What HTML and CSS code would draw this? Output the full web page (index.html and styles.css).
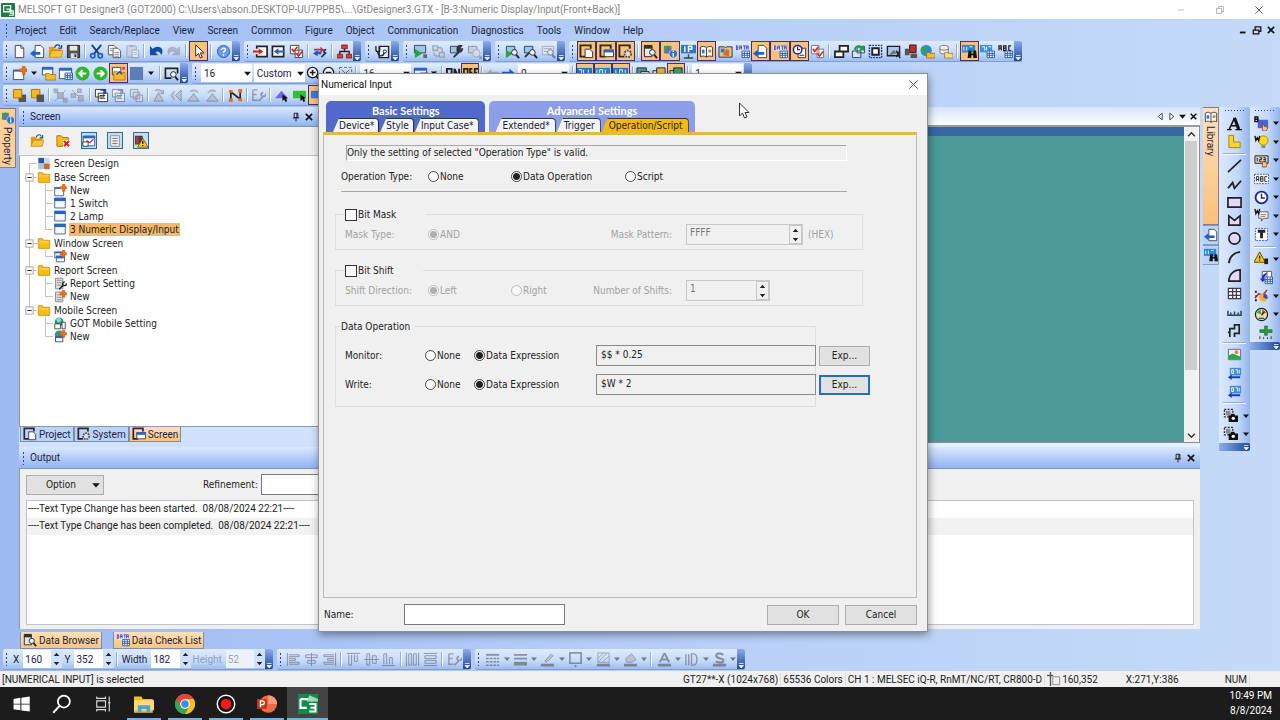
FILE: index.html
```
<!DOCTYPE html>
<html lang="en">
<head>
    <meta charset="UTF-8">
    <meta name="viewport" content="width=device-width, initial-scale=1.0">
    <title>MELSOFT GT Designer3</title>
    <link rel="stylesheet" href="styles.css">
</head>
<body>
    <div class="app">
        <!-- Title bar -->
        <header class="titlebar">
            <span class="icon" data-icon="gt"></span>
            <span class="titlebar-text">MELSOFT GT Designer3 (GOT2000) C:\Users\abson.DESKTOP-UU7PPB5\...\GtDesigner3.GTX - [B-3:Numeric Display/Input(Front+Back)]</span>
            <button class="caption" data-icon="min" aria-label="Minimize"></button>
            <button class="caption" data-icon="restore" aria-label="Restore"></button>
            <button class="caption" data-icon="close" aria-label="Close"></button>
        </header>

        <!-- Menu -->
        <nav class="menubar">
            <span class="grip"></span>
            <button>Project</button>
            <button>Edit</button>
            <button>Search/Replace</button>
            <button>View</button>
            <button>Screen</button>
            <button>Common</button>
            <button>Figure</button>
            <button>Object</button>
            <button>Communication</button>
            <button>Diagnostics</button>
            <button>Tools</button>
            <button>Window</button>
            <button>Help</button>
            <div class="mdi">
                <button class="mdi-button" data-icon="mdimin" aria-label="Minimize document"></button>
                <button class="mdi-button" data-icon="mdirestore" aria-label="Restore document"></button>
                <button class="mdi-button" data-icon="mdiclose" aria-label="Close document"></button>
            </div>
        </nav>

        <!-- Toolbars, filled in by app.js -->
        <div class="toolbars">
            <div class="toolbar-row">
                <div class="toolbar bar-standard" data-tools="new import open save | cut copy -paste | undo -redo | *select | help"></div>
                <div class="toolbar bar-edit" data-tools="screenin screenout check | swap | network"></div>
                <div class="toolbar bar-one" data-tools="stetho"></div>
                <div class="toolbar bar-comm" data-tools="run -cable tools -monitor"></div>
                <div class="toolbar bar-sim" data-tools="runfind toolfind -listfind"></div>
                <div class="toolbar bar-view" data-tools="*winpage *winblue *wingear | *dbfind *objinfo ip *book handbook data *pageleft *data *clockdoc checks | cascade swapwin frame cursorwin redwin globe database | *binocular gridtext abctable"></div>
            </div>
            <div class="toolbar-row">
                <div class="toolbar bar-screen" data-tools="newscreen v openscreen wingrid left right *openactive blue v | preview"></div>
                <div class="toolbar bar-display" data-tools="[16] [Custom] zoomin zoomout fit | [16] wingrid v | on *off | -arrowl arrowr [0] | *sys *label *ipn | layer layer2 *layer3 | [1]"></div>
            </div>
            <div class="toolbar-row">
                <div class="toolbar bar-arrange" data-tools="front back | -group -ungroup | stack -stack -stack2 | -rotate -flip -rotl -rotr | nodes | -wrench | tri rectpick *pick nodes"></div>
            </div>
        </div>

        <main class="workspace">
            <aside class="left-strip">
                <button class="side-tab"><span class="icon" data-icon="objinfo"></span>Property</button>
            </aside>

            <div class="center">
                <div class="panes">
                    <!-- Screen tree -->
                    <section class="screen-pane">
                        <div class="pane-header">
                            <span class="grip"></span>
                            <h2>Screen</h2>
                            <button class="pane-button" data-icon="pin" aria-label="Auto hide"></button>
                            <button class="pane-button" data-icon="mdiclose" aria-label="Close pane"></button>
                        </div>
                        <div class="tree-tools">
                            <button data-icon="open" aria-label="Open screen"></button>
                            <button data-icon="delete" aria-label="Delete screen"></button>
                            <button class="framed" data-icon="chartwin" aria-label="Screen property"></button>
                            <button class="framed" data-icon="list" aria-label="Detail"></button>
                            <button class="framed" data-icon="warnwin" aria-label="Check"></button>
                        </div>
                        <ul class="tree">
                            <li class="root first"><span class="icon" data-icon="design"></span>Screen Design</li>
                            <li class="root"><span class="icon expander" data-icon="minus"></span><span class="icon" data-icon="folder"></span>Base Screen</li>
                            <li class="leaf"><span class="icon" data-icon="newscreen"></span>New</li>
                            <li class="leaf"><span class="icon" data-icon="screen"></span>1 Switch</li>
                            <li class="leaf"><span class="icon" data-icon="screen"></span>2 Lamp</li>
                            <li class="leaf end"><span class="icon" data-icon="screen"></span><span class="selected">3 Numeric Display/Input</span></li>
                            <li class="root"><span class="icon expander" data-icon="minus"></span><span class="icon" data-icon="folder"></span>Window Screen</li>
                            <li class="leaf end"><span class="icon" data-icon="newwindow"></span>New</li>
                            <li class="root"><span class="icon expander" data-icon="minus"></span><span class="icon" data-icon="folder"></span>Report Screen</li>
                            <li class="leaf"><span class="icon" data-icon="report"></span>Report Setting</li>
                            <li class="leaf end"><span class="icon" data-icon="newreport"></span>New</li>
                            <li class="root last"><span class="icon expander" data-icon="minus"></span><span class="icon" data-icon="folder"></span>Mobile Screen</li>
                            <li class="leaf after"><span class="icon" data-icon="mobile"></span>GOT Mobile Setting</li>
                            <li class="leaf end after"><span class="icon" data-icon="newmobile"></span>New</li>
                        </ul>
                        <div class="pane-tabs">
                            <button><span class="icon" data-icon="winpage"></span>Project</button>
                            <button><span class="icon" data-icon="wingear"></span>System</button>
                            <button class="active"><span class="icon" data-icon="winblue"></span>Screen</button>
                        </div>
                    </section>

                    <!-- Document -->
                    <section class="document">
                        <div class="document-tabs">
                            <button data-icon="tabl" aria-label="Previous"></button>
                            <button data-icon="tabr" aria-label="Next"></button>
                            <button data-icon="down" aria-label="List"></button>
                            <button data-icon="mdiclose" aria-label="Close"></button>
                        </div>
                        <div class="canvas-frame">
                            <div class="canvas"></div>
                            <div class="scrollbar">
                                <button data-icon="up" aria-label="Scroll up"></button>
                                <div class="thumb"></div>
                                <button data-icon="chevron" aria-label="Scroll down"></button>
                            </div>
                        </div>
                    </section>
                </div>

                <!-- Output -->
                <section class="output">
                    <div class="pane-header">
                        <span class="grip"></span>
                        <h2>Output</h2>
                        <button class="pane-button" data-icon="pin" aria-label="Auto hide"></button>
                        <button class="pane-button" data-icon="mdiclose" aria-label="Close pane"></button>
                    </div>
                    <div class="output-body">
                        <div class="output-options">
                            <button class="option-button">Option<span class="icon" data-icon="down"></span></button>
                            <label for="refine">Refinement:</label>
                            <input id="refine" type="text">
                        </div>
                        <div class="log">
                            <div class="log-line">----Text Type Change has been started.&nbsp; 08/08/2024 22:21----</div>
                            <div class="log-line">----Text Type Change has been completed.&nbsp; 08/08/2024 22:21----</div>
                        </div>
                    </div>
                </section>
            </div>

            <aside class="right-strip">
                <button class="side-tab library"><span class="icon" data-icon="book"></span>Library</button>
                <button class="side-tab small" data-icon="pageleft" aria-label="Pages"></button>
                <button class="side-tab small" data-icon="binocular" aria-label="Search"></button>
            </aside>
            <div class="toolbar vertical bar-figure" data-tools="text logo | line polyline rect polygon circle arc sector table scale pipe | image dxf dxf | camera^ camera^"></div>
            <div class="toolbar vertical bar-object" data-tools="switch^ lamp^ numeric^ ascii^ clock^ comment^ textobj^ | alarm^ recipe graph^ meter^ slider"></div>
        </main>

        <div class="dock-tabs">
            <button><span class="icon" data-icon="dbfind"></span>Data Browser</button>
            <button><span class="icon" data-icon="data"></span>Data Check List</button>
        </div>

        <div class="toolbar-row bottom">
            <div class="toolbar bar-coords">
                <span class="grip"></span>
                <label for="px">X</label>
                <span class="spin"><input id="px" type="text" value="160"><span class="icon" data-icon="updown"></span></span>
                <label for="py">Y</label>
                <span class="spin"><input id="py" type="text" value="352"><span class="icon" data-icon="updown"></span></span>
                <span class="sep"></span>
                <label for="pw">Width</label>
                <span class="spin"><input id="pw" type="text" value="182"><span class="icon" data-icon="updown"></span></span>
                <label class="disabled" for="ph">Height</label>
                <span class="spin disabled"><input id="ph" type="text" value="52" disabled><span class="icon" data-icon="updown"></span></span>
                <span class="cap"></span>
            </div>
            <div class="toolbar bar-align" data-tools="-alignl -alignc -alignr | -alignt -alignm -alignb | -distx -disty | -wrench"></div>
            <div class="toolbar bar-style" data-tools="-dash^ -lines^ -pen^ -outline^ -hatch^ -bucket^ | -fonta^ -dee^ -ess^"></div>
        </div>

        <footer class="statusbar">
            <span class="status-message">[NUMERICAL INPUT] is selected</span>
            <span class="status-cell">GT27**-X (1024x768)</span>
            <span class="status-cell">65536 Colors</span>
            <span class="status-cell">CH 1 : MELSEC iQ-R, RnMT/NC/RT, CR800-D</span>
            <span class="status-cell status-pos"><span class="icon" data-icon="corner"></span>160,352</span>
            <span class="status-cell status-xy">X:271,Y:386</span>
            <span class="status-cell status-num">NUM</span>
        </footer>

        <nav class="taskbar">
            <button data-icon="start" aria-label="Start"></button>
            <button data-icon="search" aria-label="Search"></button>
            <button data-icon="taskview" aria-label="Task view"></button>
            <button class="running" data-icon="explorer" aria-label="File Explorer"></button>
            <button class="running" data-icon="chrome" aria-label="Chrome"></button>
            <button class="running" data-icon="record" aria-label="Recorder"></button>
            <button class="running" data-icon="powerpoint" aria-label="PowerPoint"></button>
            <button class="running current" data-icon="gttask" aria-label="GT Designer3"></button>
            <div class="clock"><span>10:49 PM</span><span>8/8/2024</span></div>
        </nav>
    </div>

    <!-- Numerical Input dialog -->
    <form class="dialog" onsubmit="return false">
        <div class="dialog-title">
            <h1>Numerical Input</h1>
            <button type="button" class="dialog-close" data-icon="close" aria-label="Close"></button>
        </div>
        <div class="tab-groups">
            <div class="tab-group basic">
                <h2>Basic Settings</h2>
                <div class="tabs">
                    <button type="button">Device*</button>
                    <button type="button">Style</button>
                    <button type="button">Input Case*</button>
                </div>
            </div>
            <div class="tab-group advanced">
                <h2>Advanced Settings</h2>
                <div class="tabs">
                    <button type="button">Extended*</button>
                    <button type="button">Trigger</button>
                    <button type="button" class="active">Operation/Script</button>
                </div>
            </div>
        </div>

        <div class="tab-page">
            <p class="notice">Only the setting of selected "Operation Type" is valid.</p>
            <div class="operation-type">
                <span>Operation Type:</span>
                <label><input type="radio" name="optype">None</label>
                <label><input type="radio" name="optype" checked>Data Operation</label>
                <label><input type="radio" name="optype">Script</label>
            </div>

            <fieldset class="group">
                <legend><label><input type="checkbox">Bit Mask</label></legend>
                <div class="group-row disabled">
                    <span>Mask Type:</span>
                    <label><input type="radio" name="mask" checked disabled>AND</label>
                    <label class="field-label" for="pattern">Mask Pattern:</label>
                    <span class="number wide"><input id="pattern" type="text" value="FFFF" disabled><span class="icon" data-icon="updown"></span></span>
                    <span class="unit">(HEX)</span>
                </div>
            </fieldset>

            <fieldset class="group">
                <legend><label><input type="checkbox">Bit Shift</label></legend>
                <div class="group-row disabled">
                    <span>Shift Direction:</span>
                    <label><input type="radio" name="shift" checked disabled>Left</label>
                    <label><input type="radio" name="shift" disabled>Right</label>
                    <label class="field-label" for="shifts">Number of Shifts:</label>
                    <span class="number"><input id="shifts" type="text" value="1" disabled><span class="icon" data-icon="updown"></span></span>
                </div>
            </fieldset>

            <fieldset class="group data-operation">
                <legend>Data Operation</legend>
                <div class="data-row">
                    <span>Monitor:</span>
                    <label><input type="radio" name="monitor">None</label>
                    <label><input type="radio" name="monitor" checked>Data Expression</label>
                    <input class="expression" type="text" value="$$ * 0.25" aria-label="Monitor expression" readonly>
                    <button type="button" class="push">Exp...</button>
                </div>
                <div class="data-row">
                    <span>Write:</span>
                    <label><input type="radio" name="write">None</label>
                    <label><input type="radio" name="write" checked>Data Expression</label>
                    <input class="expression" type="text" value="$W * 2" aria-label="Write expression" readonly>
                    <button type="button" class="push focused">Exp...</button>
                </div>
            </fieldset>
        </div>

        <div class="dialog-footer">
            <label for="objname">Name:</label>
            <input id="objname" type="text">
            <button type="submit" class="push">OK</button>
            <button type="button" class="push">Cancel</button>
        </div>
    </form>

    <svg class="pointer" viewBox="0 0 12 18"><path d="M1.5 1v13l3-3 2 5 2.500-1-2-4.500h4z" fill="#fff" stroke="#333"/></svg>

    <script src="app.js"></script>
</body>
</html>
```

FILE: styles.css
```
* {
    box-sizing: border-box;
}

body {
    margin: 0;
    font-family: Roboto, "Open Sans", sans-serif;
    font-size: 10px;
    line-height: 13px;
    color: #1b2440;
}

button, input, select {
    font: inherit;
    color: inherit;
    margin: 0;
    padding: 0;
    border: 0;
    border-radius: 0;
    background: none;
    outline: none;
}

h1, h2, p, ul {
    margin: 0;
    padding: 0;
    font-size: 10px;
    font-weight: normal;
}

button svg, .icon svg {
    display: block;
    width: 14px;
    height: 14px;
    margin: auto;
}

.icon {
    display: inline-block;
    flex: none;
}

.app {
    min-height: 100vh;
    display: flex;
    flex-direction: column;
    background: linear-gradient(90deg, #9dbaf2, #b6cef8 50%, #c5daf8);
}

/* title and menu */
.titlebar {
    height: 19px;
    display: flex;
    align-items: center;
    background: #fff;
    color: #858585;
    padding: 0 2px 0 1px;
}

.titlebar-text {
    margin-left: 3px;
    margin-right: auto;
}

.caption {
    width: 39px;
}

.caption svg {
    width: 10px;
    height: 10px;
}

.menubar {
    height: 22px;
    display: flex;
    align-items: center;
    padding-left: 5px;
}

.menubar > button {
    padding: 0 7px 0 6px;
}

.mdi {
    margin-left: auto;
    margin-right: 2px;
    display: flex;
}

.mdi-button {
    width: 14px;
}

.mdi-button svg,
.pane-button svg {
    width: 10px;
    height: 10px;
}

.grip {
    flex: none;
    width: 4px;
    height: 14px;
    background: radial-gradient(#33436e 1px, transparent 1px) 0 0 / 3px 4px repeat-y;
}

/* toolbars */
.toolbar-row {
    display: flex;
    gap: 4px;
    height: 22px;
    padding: 0 0 1px 3px;
}

.toolbar {
    display: flex;
    align-items: stretch;
    background: linear-gradient(#deebfd, #c6daf8 60%, #9dbcf0);
    border-bottom: 1px solid #7e9fdc;
    border-radius: 2px;
}

.toolbar .grip {
    align-self: center;
    margin: 0 2px;
}

.toolbar .tool {
    flex: 1 1 0;
    display: flex;
    align-items: center;
    min-width: 0;
}

.tool > svg {
    width: 15px;
    height: 15px;
}

.toolbar .tool.on {
    background: #fbc07c;
    border: 1px solid #43306e;
}

.toolbar .tool.off {
    opacity: 0.5;
    filter: grayscale(0.8);
}

.toolbar .drop {
    flex: 0 0 11px;
}

.toolbar .drop svg,
.arrow svg {
    width: 8px;
    height: 8px;
}

.sep {
    flex: 0 0 1px;
    margin: 3px 2px;
    background: #8fabdf;
    border-right: 1px solid #fff;
    min-width: 2px;
}

.cap {
    flex: 0 0 8px;
    margin-left: auto;
    background: linear-gradient(#8badea, #1f4796);
    border-radius: 0 2px 2px 0;
    display: flex;
    align-items: flex-end;
}

.cap svg {
    width: 8px;
    height: 8px;
}

.combo {
    flex: 3 1 0;
    min-width: 0;
    margin: 1px;
    background: #fff;
    display: flex;
    align-items: center;
    padding-left: 3px;
}

.combo select {
    appearance: none;
    flex: 1;
    min-width: 0;
}

.combo svg {
    width: 9px;
    height: 9px;
}

.bar-standard { width: 237px; }
.bar-edit { width: 117px; }
.bar-one { width: 34px; }
.bar-comm { width: 88px; }
.bar-sim { width: 70px; }
.bar-view { width: 453px; }
.bar-screen { width: 185px; }
.bar-display { width: 560px; }
.bar-arrange { width: 350px; }
.bar-coords { width: 270px; }
.bar-align { width: 194px; }
.bar-style { width: 270px; }

.vertical {
    flex-direction: column;
    align-self: flex-start;
    background: linear-gradient(90deg, #dce9fd, #c3d8f8 60%, #94b3ea);
    border-bottom: 0;
}

.vertical .grip {
    width: 22px;
    height: 3px;
    margin: 2px 0;
    background: radial-gradient(#33436e 1px, transparent 1px) 0 0 / 3px 3px repeat-x;
}

.vertical .tool {
    width: 100%;
}

.vertical .sep {
    margin: 2px 4px;
    min-height: 2px;
    border-right: 0;
    border-bottom: 1px solid #fff;
}

.vertical .cap {
    margin-left: 0;
    justify-content: flex-end;
    background: linear-gradient(90deg, #8badea, #1f4796);
}

.bar-figure { height: 344px; }
.bar-object { height: 243px; }

/* workspace */
.workspace {
    flex: 1;
    display: grid;
    grid-template-columns: 19px 1fr 19px 31px 30px;
}

.left-strip {
    padding-top: 1px;
}

.right-strip {
    padding: 0 0 0 3px;
    display: flex;
    flex-direction: column;
}

.side-tab {
    writing-mode: vertical-rl;
    display: flex;
    align-items: center;
    gap: 2px;
    width: 16px;
    height: 60px;
    padding: 2px 0;
    background: #fbcf98;
    border: 1px solid #8a7a86;
    border-left: 0;
}

.side-tab.library {
    height: 118px;
    background: linear-gradient(#fde2bd, #fbc07c);
}

.side-tab.small {
    height: 20px;
    background: #bcd2f7;
    border-color: #7e97cc;
}

.center {
    display: flex;
    flex-direction: column;
    min-width: 0;
}

.panes {
    flex: 1;
    display: flex;
}

.pane-header {
    display: flex;
    align-items: center;
    height: 22px;
    padding: 0 3px;
    background: linear-gradient(#dbe8fd, #8fb3f3);
    border-bottom: 1px solid #7b95c4;
}

.pane-header h2 {
    margin: 0 auto 0 4px;
}

.pane-button {
    width: 13px;
}

.screen-pane {
    width: 299px;
    display: flex;
    flex-direction: column;
    background: linear-gradient(#fff, #cfe0fb);
}

.screen-pane .pane-header {
    height: 20px;
}

.tree-tools {
    display: flex;
    gap: 10px;
    height: 29px;
    padding: 5px 10px;
    background: #f0f0f0;
    border-bottom: 1px solid #c4c4c4;
}

.tree-tools button {
    width: 16px;
    height: 17px;
}

.tree-tools .framed {
    background: #c5dcf5;
    border: 1px solid #2d6a9a;
}

.tree {
    flex: 1;
    background: #fff;
    list-style: none;
    color: #222;
    font-family: "DejaVu Sans Condensed", "DejaVu Sans", sans-serif;
    border-left: 1px solid #8d98ad;
}

.tree li {
    --v: linear-gradient(#c2c2c2, #c2c2c2);
    display: flex;
    align-items: center;
    gap: 3px;
    height: 13px;
    background-repeat: no-repeat;
}

.tree .icon svg {
    height: 13px;
}

.tree .root {
    height: 14px;
    padding-left: 17px;
    background-image: var(--v), var(--v);
    background-position: 9px 0, 9px 50%;
    background-size: 1px 100%, 8px 1px;
}

.tree .root.first {
    background-position: 9px 100%, 9px 50%;
    background-size: 1px 50%, 8px 1px;
}

.tree .root.last {
    background-size: 1px 50%, 8px 1px;
}

.tree .leaf {
    padding-left: 33px;
    background-image: var(--v), var(--v), var(--v);
    background-position: 9px 0, 25px 0, 25px 50%;
    background-size: 1px 100%, 1px 100%, 8px 1px;
}

.tree .leaf.end {
    background-size: 1px 100%, 1px 50%, 8px 1px;
}

.tree .leaf.after {
    background-size: 0 0, 1px 100%, 8px 1px;
}

.tree .leaf.end.after {
    background-size: 0 0, 1px 50%, 8px 1px;
}

.tree .expander {
    width: 9px;
    margin-left: -12px;
}

.tree .expander svg {
    width: 9px;
    height: 9px;
}

.tree .selected {
    background: #f6b86a;
    box-shadow: 1px 0 0 #f6b86a, -1px 0 0 #f6b86a;
}

.pane-tabs, .dock-tabs {
    display: flex;
    color: #1b2440;
}

.pane-tabs {
    height: 21px;
    padding: 0 0 5px 1px;
    border-top: 1px solid #8d98ad;
}

.pane-tabs button, .dock-tabs button {
    display: flex;
    align-items: center;
    gap: 2px;
    padding: 0 2px;
    background: #bcd3f8;
    border: 1px solid #7b8db5;
    border-top: 0;
}

.pane-tabs .active, .dock-tabs button {
    background: linear-gradient(#fde0b8, #fbc37f);
}

/* document */
.document {
    flex: 1;
    display: flex;
    flex-direction: column;
    background: #e6effc;
}

.document-tabs {
    height: 18px;
    display: flex;
    justify-content: flex-end;
    align-items: center;
    padding-right: 1px;
    background: linear-gradient(#d5e4fb, #fdfeff);
}

.document-tabs button {
    width: 11px;
}

.document-tabs svg {
    width: 9px;
    height: 9px;
}

.canvas-frame {
    flex: 1;
    display: flex;
    margin-bottom: 4px;
    border: 1px solid #8b8b8b;
    border-top: 2px solid #9a9a9a;
    padding-right: 1px;
    background: #fff;
}

.canvas {
    flex: 1;
    background: #4b9999;
    border-top: 9px solid #3668a6;
}

.scrollbar {
    width: 14px;
    display: flex;
    flex-direction: column;
    background: #f0f0f0;
}

.scrollbar button {
    height: 14px;
}

.scrollbar button svg {
    width: 9px;
    height: 9px;
}

.thumb {
    height: 229px;
    margin: 0 1px auto;
    background: #cdcdcd;
}

/* output */
.output-body {
    padding: 5px 6px 4px;
    background: #f0f0f0;
    border-left: 1px solid #8d98ad;
    color: #222;
}

.output-options {
    display: flex;
    align-items: center;
    height: 21px;
    font-family: "DejaVu Sans Condensed", "DejaVu Sans", sans-serif;
}

.option-button {
    display: flex;
    align-items: center;
    justify-content: flex-end;
    gap: 15px;
    width: 78px;
    height: 20px;
    padding-right: 2px;
    background: #e1e1e1;
    border: 1px solid #adadad;
}

.option-button svg {
    width: 10px;
}

.output-options label {
    margin: 0 3px 0 99px;
}

.output-options input {
    width: 240px;
    height: 21px;
    background: #fff;
    border: 1px solid #7a7a7a;
}

.log {
    height: 125px;
    margin-top: 5px;
    background: #fff;
    border: 1px solid #c0c4cc;
}

.log-line {
    height: 17px;
    padding-left: 1px;
    line-height: 16px;
}

.log-line:nth-child(even) {
    background: #f2f2f2;
}

.dock-tabs {
    height: 20px;
    gap: 11px;
    padding: 3px 0 0 20px;
}

/* coordinates toolbar */
.bottom {
    height: 22px;
}

.bar-coords {
    align-items: center;
}

.bar-coords .sep,
.bar-coords .cap {
    align-self: stretch;
}

.bar-coords label {
    padding: 0 4px 0 2px;
}

.bar-coords label.disabled {
    color: #8d9fc2;
}

.spin {
    flex: 1 1 0;
    min-width: 0;
    display: flex;
    align-items: center;
    height: 18px;
    background: #fff;
    padding-left: 2px;
}

.spin input {
    flex: 1;
    width: 0;
    min-width: 0;
}

.spin .icon {
    background: #cfe0fb;
}

.spin .icon svg,
.number .icon svg {
    width: 11px;
    height: 18px;
}

.spin.disabled {
    background: #edf1f8;
    color: #98a2b5;
}

/* status bar */
.statusbar {
    display: flex;
    align-items: center;
    height: 16px;
    background: #f0f0f0;
    color: #222;
    padding-left: 2px;
}

.status-message {
    margin-right: auto;
}

.status-cell {
    padding: 0 2px;
    border-right: 1px solid #dcdcdc;
}

.status-pos {
    display: flex;
    align-items: center;
    gap: 1px;
    border-right: 0;
}

.status-xy {
    margin-left: 24px;
    border-right: 0;
}

.status-num {
    margin: 0 30px 0 42px;
}

/* taskbar */
.taskbar {
    display: flex;
    height: 33px;
    background: #1c1c1c;
    color: #fff;
}

.taskbar button {
    width: 41px;
    padding: 0 4px;
}

.taskbar button svg {
    width: 20px;
    height: 20px;
}

.taskbar .running {
    background: linear-gradient(#76b0e0, #76b0e0) 50% 100% / 34px 2px no-repeat;
}

.taskbar .current {
    background: linear-gradient(#76b0e0, #76b0e0) 50% 100% / 100% 2px no-repeat, #444;
}

.clock {
    margin-left: auto;
    padding: 2px 8px 0 0;
    display: flex;
    flex-direction: column;
    gap: 2px;
    text-align: right;
}

/* dialog */
.dialog {
    position: absolute;
    left: 318px;
    top: 73px;
    width: 610px;
    background: #f0f0f0;
    border: 1px solid #8a8f9a;
    box-shadow: 1px 3px 8px rgba(0, 0, 0, 0.4);
    color: #222;
    font-family: "DejaVu Sans Condensed", "DejaVu Sans", sans-serif;
}

.dialog-title {
    display: flex;
    justify-content: space-between;
    align-items: center;
    height: 21px;
    padding: 0 8px 0 2px;
    background: #fff;
    font-family: Roboto, sans-serif;
    color: #111;
}

.dialog-close svg {
    width: 11px;
    height: 11px;
}

.tab-groups {
    display: flex;
    gap: 4px;
    padding: 6px 7px 0;
}

.tab-group {
    height: 31px;
    border-radius: 5px 5px 0 0;
    padding: 3px 6px 0 7px;
}

.tab-group.basic {
    background: #5069cb;
}

.tab-group.advanced {
    background: #8d9ee8;
}

.tab-group h2 {
    color: #fff;
    font: bold 11px/14px Lato, sans-serif;
    text-align: center;
}

.tabs {
    display: flex;
    gap: 1px;
}

.tabs button {
    height: 14px;
    padding: 0 4px 0 6px;
    background: #f1f5fd;
    border-top: 1px solid #333;
    border-right: 1px solid #222;
    border-radius: 0 4px 0 0;
    clip-path: polygon(6px 0, 100% 0, 100% 100%, 0 100%);
    line-height: 12px;
}

.advanced .tabs button {
    padding: 0 5px 0 7px;
}

.tabs .active {
    background: #f5b90b;
}

.tab-page {
    height: 466px;
    margin: 0 10px 0 4px;
    padding: 10px 53px 0 11px;
    border: 1px solid #bcbcbc;
    border-top: 3px solid #e0bb42;
}

.notice {
    height: 16px;
    margin: 0 16px 0 11px;
    border: 1px solid #a8a8a8;
    border-right-color: #fff;
    border-bottom-color: #fff;
}

.operation-type {
    display: grid;
    grid-template-columns: 87px 83px 114px auto;
    align-items: center;
    height: 30px;
    margin: 1px 16px 16px 6px;
    border-bottom: 1px solid #a8a8a8;
}

.dialog label {
    display: flex;
    align-items: center;
}

.dialog input[type="radio"] {
    appearance: none;
    width: 11px;
    height: 11px;
    margin-right: 1px;
    border: 1px solid #444;
    border-radius: 50%;
    background: #fff;
}

.dialog input[type="radio"]:checked {
    background: radial-gradient(#222 3px, #fff 4px);
}

.dialog input[type="checkbox"] {
    appearance: none;
    width: 12px;
    height: 12px;
    margin-right: 1px;
    border: 1px solid #333;
    background: #fff;
}

.dialog .disabled {
    color: #a2a2a2;
}

.dialog input[type="radio"]:disabled {
    border-color: #bcbcbc;
    background: #f8f8f8;
}

.dialog input[type="radio"]:disabled:checked {
    background: radial-gradient(#b0b0b0 3px, #f8f8f8 4px);
}

.group {
    margin: 0 0 14px;
    padding: 0 0 0 9px;
    border: 1px solid #dfdfdf;
    min-width: 0;
}

.group legend {
    padding: 0 30px 0 0;
    height: 13px;
}

.group-row {
    display: grid;
    grid-template-columns: 83px 83px 70px 105px 118px auto;
    align-items: center;
    height: 28px;
    padding-bottom: 2px;
}

.field-label {
    grid-column: 3 / 5;
    justify-content: flex-end;
    padding-right: 14px;
}

.group-row label:nth-child(3):not(.field-label) {
    grid-column: 3;
}

.group-row label:nth-child(4) {
    grid-column: 4;
}

.number {
    display: flex;
    width: 84px;
    height: 21px;
    border: 1px solid #c8c8c8;
}

.number.wide {
    width: 117px;
}

.number input {
    flex: 1;
    min-width: 0;
    padding: 0 3px 3px;
    color: #777;
}

.number .icon {
    border: 1px solid #c8c8c8;
}

.unit {
    padding-left: 4px;
}

.data-operation {
    margin-right: 47px;
}

.data-operation legend {
    margin-left: -4px;
    padding-right: 4px;
}

.data-row {
    display: grid;
    grid-template-columns: 80px 49px 122px 220px 50px;
    align-items: center;
    height: 29px;
    margin-right: -55px;
}

.data-row:first-of-type {
    margin-top: 8px;
}

.data-row:last-child {
    margin-bottom: 7px;
}

.data-row .push {
    margin-left: 3px;
    width: 51px;
    height: 20px;
}

.expression {
    height: 21px;
    padding: 0 4px 3px;
    border: 1px solid #8a8a8a;
}

.push {
    width: 72px;
    height: 20px;
    background: #e1e1e1;
    border: 1px solid #adadad;
}

.push.focused {
    border: 2px solid #1f6fc4;
}

.dialog-footer {
    display: flex;
    align-items: center;
    height: 33px;
    padding: 0 10px 0 5px;
    gap: 6px;
}

.dialog-footer input {
    width: 161px;
    height: 21px;
    margin: 0 auto 0 44px;
    background: #fff;
    border: 1px solid #7a7a7a;
}

/* mouse pointer over the dialog */
.pointer {
    position: absolute;
    left: 738px;
    top: 102px;
    width: 12px;
    height: 18px;
}
```

FILE: app.js
```
// shared pieces of the 16x16 icons
const page = '<path d="M3.500 1.500h6l3 3v10h-9z" fill="#fff" stroke="#444"/><path d="M9.500 1.500v3h3" stroke="#444"/>';
const folder = '<path d="M1 3h5l1 2h7v9H1z" fill="#e89a14"/><path d="M1 14l3-7h12l-2 7z" fill="#fcc63c" stroke="#a86e08" stroke-width=".6"/>';
const win = '<path d="M1.500 2.500h13v11h-13z" fill="#fff" stroke="#3c4c70"/><path d="M1 2h14v3H1z" fill="#2e63c8"/>';
const plus = '<path d="M11 0h3v3h2v3h-2v3h-3V6H8V3h3z" fill="#f0701a" stroke="#b84a08" stroke-width=".5"/>';
const find = '<circle cx="10" cy="9" r="3" fill="#e6f2ff" stroke="#222"/><path d="M12 11.500l3 3.500" stroke="#222" stroke-width="2"/>';
const darkwin = '<path d="M7 13.500H1.500v-12h11V5" stroke="#2a2a2a" stroke-width="2"/>';
const mon = '<path d="M1.500 2.500h9v7h-9z" fill="#9ac6e8" stroke="#345"/>';
const grid = '<path d="M7.500 7.500h8v7h-8zM7.500 10h8M7.500 12h8M10 8v6M13 8v6" fill="#fff" stroke="#2e5aa8"/>';
const dataWord = '<rect x="0" y="1" width="14" height="6" fill="#e8ecff"/><path d="M1.500 2v4M1 2h2v4H1M5 6V2h2v4M5 4h2M8.500 2h3M10 2v4M12 6V2h2v4M12 4h2" stroke="#3038c8" stroke-width=".9"/>';
const wrench = '<path d="M5 14l6-6M9 4a3 3 0 0 1 4-2l-2 2 1 2 2-.500a3 3 0 0 1-5 2z" fill="#333" stroke="#333" stroke-width="2"/>';

const icons = {
    gt: '<rect width="16" height="16" rx="1" fill="#1d7b46"/><path d="M3 3h8v7H3z" stroke="#fff" stroke-width="1.500"/><path d="M6 7h5M9 9h5v5H9M10 11.500h4" stroke="#fff" stroke-width="1.300"/>',
    min: '<path d="M3 8h10" stroke="#999"/>',
    restore: '<path d="M2.500 5.500h8v8h-8zM5.500 5V2.500h8v8H11" stroke="#888"/>',
    close: '<path d="M2 2l12 12M14 2L2 14" stroke="#444" stroke-width="1.300"/>',
    mdimin: '<path d="M3 12h9" stroke="#111" stroke-width="3"/>',
    mdirestore: '<path d="M2 8h9v6H2zM5 7V3h9v7h-3" stroke="#111" stroke-width="2"/>',
    mdiclose: '<path d="M3 3l10 10M13 3L3 13" stroke="#111" stroke-width="2.600"/>',
    pin: '<path d="M5 2h6v7H5zM9.500 2v7M3 9.500h10M8 10v5" stroke="#222" stroke-width="1.600"/>',
    down: '<path d="M2 5h12l-6 7z" fill="#111"/>',
    up: '<path d="M2 11l6-6 6 6" stroke="#333" stroke-width="2.500"/>',
    chevron: '<path d="M2 5l6 6 6-6" stroke="#333" stroke-width="2.500"/>',
    tabl: '<path d="M11 2v12L4 8z" stroke="#333" stroke-width="1.500"/>',
    tabr: '<path d="M5 2v12l7-6z" stroke="#333" stroke-width="1.500"/>',
    updown: '<path d="M4 3.500L8-1l4 4.500zM4 12.500L8 17l4-4.500z" fill="#222"/>',
    minus: '<path d="M1.500 1.500h13v13h-13z" fill="#fff" stroke="#999" stroke-width="1.500"/><path d="M4 8h8" stroke="#333" stroke-width="1.800"/>',
    capdown: '<path d="M4 5h9M4 9h9l-4.500 5z" fill="#fff" stroke="#fff" stroke-width="1.500"/>',

    new: page,
    import: '<path d="M5.500 1.500h6l3 3v10h-9z" fill="#fff" stroke="#444"/><path d="M0 10l5-4v2.500h6v3H5V14z" fill="#1b5fd0"/>',
    open: folder + '<path d="M7 4c1-4 5-4 6-1M14.500 1v3.500H11" stroke="#1a4a9a" stroke-width="1.300"/>',
    save: '<path d="M1.500 1.500h13v13h-13z" fill="#555" stroke="#222"/><path d="M4 2h8v5H4z" fill="#e8e8e8"/><path d="M5 10h7v5H5z" fill="#ddd"/><path d="M9 11h2v3H9z" fill="#333"/>',
    cut: '<path d="M3 1l8 10M13 1L5 11" stroke="#1b3c98" stroke-width="2"/><circle cx="4" cy="12.500" r="2.300" stroke="#1d5cd6" stroke-width="1.800"/><circle cx="12" cy="12.500" r="2.300" stroke="#1d5cd6" stroke-width="1.800"/>',
    copy: '<path d="M1.500 1.500h6l2 2v8h-8z" fill="#fff" stroke="#555"/><path d="M6.500 4.500h5l3 3v7h-8z" fill="#fff" stroke="#555"/><path d="M8 9h5M8 11h5M8 13h5M3 5h3M3 7h3" stroke="#888"/>',
    paste: '<path d="M2 2h10v12H2z" fill="#ccc" stroke="#777"/><path d="M5 1h4v2H5z" fill="#777"/><path d="M7.500 6.500h7v8h-7z" fill="#fff" stroke="#777"/><path d="M9 9h4M9 11h4" stroke="#999"/>',
    undo: '<path d="M1 2v10h9L7 9c2-2 5-1 6 3 3-5 1-9-4-9-2 0-3 1-5 2z" fill="#0f4fa8"/>',
    redo: '<path d="M15 2v10H6l3-3c-2-2-5-1-6 3-3-5-1-9 4-9 2 0 3 1 5 2z" fill="#7889ad"/>',
    select: '<path d="M5 1v12l3-3 2 5 2-1-2-4.500h4z" fill="#fff" stroke="#222"/>',
    help: '<circle cx="8" cy="8" r="6.500" fill="#6b9be8" stroke="#2c5db8"/><path d="M6 6.500c0-3 4.500-2.500 4 0-.300 1.200-2 1.300-2 3M8 11v1.600" stroke="#fff" stroke-width="1.500"/>',
    screenin: '<path d="M4 5V2.500h11v11H4V11" stroke="#222" stroke-width="1.800" fill="#fff"/><path d="M0 7h6V4.500L11 8l-5 3.500V9H0z" fill="#e01e1e"/>',
    screenout: '<path d="M1.500 2.500h12v11h-12z" stroke="#222" stroke-width="1.800" fill="#fff"/><path d="M14 7H8V4.500L3 8l5 3.500V9h6z" fill="#1b5fd0"/>',
    check: '<path d="M1.500 1.500h9v9h-9zM6.500 6.500h8v8h-8z" fill="#fff" stroke="#444"/><path d="M3 5l2 3 4-5M8 10l2 3 4-5" stroke="#d82020" stroke-width="1.700"/>',
    swap: '<path d="M1 5h7V3l4 3.500L8 9V7H1z" fill="#c82a4a"/><path d="M9 8H5V6.500L0 10l5 3v-2h4z" fill="#2a50c8"/><path d="M9 14l5-5M14 6c-3 0-3 4 0 4" stroke="#333" stroke-width="1.800"/>',
    network: '<path d="M8 5v3M3 11V8h10v3" stroke="#222" stroke-width="1.500"/><path d="M5 1h6v4H5zM0 11h6v4H0zM10 11h6v4h-6z" fill="#e23a2e" stroke="#7a1410" stroke-width=".8"/>',
    stetho: '<path d="M4.500 2.500h10v12h-10z" fill="#dff0ff" stroke="#222" stroke-width="1.500"/><path d="M1 2v4c0 3 4 3 4 0V2M3 8c0 6 6 6 7 1" stroke="#222" stroke-width="1.400"/><circle cx="10.500" cy="8" r="1.700" fill="#fff" stroke="#222"/>',
    run: '<path d="M1.500 1.500h12v8h-12z" fill="#9ac6e8" stroke="#345"/><path d="M2 5l8 5-8 5z" fill="#1fa838"/><path d="M11 11h4v4h-4z" fill="#667"/>',
    cable: '<path d="M2 2h5v5H2zM9 9h5v5H9zM3 9c0 4 3 5 6 3M7 4c4-1 6 1 5 5" fill="#ccc" stroke="#777" stroke-width="1.500"/>',
    tools: mon + wrench,
    monitor: mon + '<circle cx="10" cy="10" r="4" fill="#ddd" stroke="#777"/><path d="M13 13h3v3h-3z" fill="#777"/>',
    runfind: mon + '<path d="M1 6l7 4.500L1 15z" fill="#1fa838"/>' + find,
    toolfind: mon + '<path d="M2 14l5-5" stroke="#333" stroke-width="2"/>' + find,
    listfind: '<path d="M1.500 2.500h12v9h-12zM3 5h9M3 8h9" fill="#eee" stroke="#777"/>' + find,
    winpage: darkwin + '<path d="M6.500 5.500h5l3 3v6h-8z" fill="#fff" stroke="#333"/>',
    winblue: darkwin + '<path d="M5.500 6.500h10v7h-10z" fill="#fff" stroke="#333"/><path d="M5 6h11v3H5z" fill="#2e63c8"/>',
    wingear: darkwin + '<path d="M7 8h6v6H7z" fill="#ddd"/><circle cx="10.500" cy="10.500" r="3.500" stroke="#555" stroke-width="2" stroke-dasharray="2 1"/>',
    dbfind: '<path d="M1.500 2.500h8v11h-8z" fill="#e6e6e6" stroke="#222"/><path d="M1 1h9v4H1z" fill="#333"/>' + find,
    objinfo: '<path d="M1 2h8v8H1z" fill="#35a84a"/><path d="M5 1l6 9H3z" fill="#7a60c8"/><circle cx="11" cy="10.500" r="4.500" fill="#2472cc" stroke="#fff" stroke-width=".6"/><path d="M11 7v1.500M11 9.500v4" stroke="#fff" stroke-width="1.600"/>',
    ip: '<rect y="1" width="16" height="9" fill="#2a78c8"/><path d="M4 2.500v6M8 8.500v-6h3.500v3H8" stroke="#fff" stroke-width="1.600"/><path d="M8 11v4M3 15h10" stroke="#345" stroke-width="1.500"/>',
    book: '<path d="M1.500 3.500c2-1.500 5-1 6.500.500 1.500-1.500 4.500-2 6.500-.500v10c-2-1-5-1-6.500.500-1.500-1.500-4.500-1.500-6.500-.500z" fill="#fff" stroke="#333"/><path d="M8 4v10" stroke="#333"/><path d="M3 6h3v4H3z" fill="#2e78d8"/><path d="M10 6h3v3h-3z" fill="#e07a20"/>',
    handbook: '<path d="M1 3h6l1 1 1-1h6v11H1z" fill="#e8c090" stroke="#333"/><path d="M3 5h4v4H3z" fill="#2e78d8"/><path d="M5 12l4-7 3 2v6z" fill="#d8701a"/>',
    data: dataWord + grid,
    pageleft: '<path d="M5.500 1.500h6l3 3v10h-9z" fill="#fff" stroke="#444"/><path d="M0 10l5-4v2.500h7v3H5V14z" fill="#1b5fd0"/>',
    clockdoc: '<path d="M6.500 4.500h8v10h-8z" fill="#fff" stroke="#333"/><circle cx="6" cy="6" r="4.500" fill="#fff" stroke="#2028b8" stroke-width="1.600"/><path d="M6 3v3h2.500M8 12h5" stroke="#2028b8" stroke-width="1.300"/>',
    checks: '<path d="M1.500 1.500h8v9h-8zM7.500 5.500h7v9h-7z" fill="#fff" stroke="#777"/><path d="M3 5l2 3 4-5M8 10l2 3 4-5" stroke="#e02020" stroke-width="1.700"/>',
    cascade: '<path d="M6 2h9v6H6zM1 8h9v6H1z" fill="#fff" stroke="#222" stroke-width="1.900"/>',
    swapwin: '<path d="M1.500 7.500h9v7h-9zM6.500 2.500h8v7h-8z" fill="#cfe4ff" stroke="#345"/><path d="M3 6c1-5 6-6 9-3l2-2v6H8l2-2C8 3 5 4 5 7z" fill="#1fa040"/>',
    frame: '<path d="M1.500 1.500h13v13h-13z" stroke="#223a90" stroke-width="1.500" stroke-dasharray="2 1"/><path d="M4.500 4.500h7v7h-7z" fill="#fff" stroke="#222" stroke-width="2"/>',
    cursorwin: '<path d="M1.500 2.500h13v10h-13z" fill="#a8c8ec" stroke="#222" stroke-width="1.500"/><path d="M3 12l5-6 4 4" fill="#678"/><path d="M11 7l4 8M14 8l-3 6" stroke="#222" stroke-width="1.500"/>',
    redwin: '<path d="M7 1h7v8H7z" fill="#c82828" stroke="#222"/><path d="M2 5h5v7H2zM8 10h7v5H8z" fill="#555"/>',
    globe: '<circle cx="6.500" cy="7" r="6" fill="#2c8ad0"/><path d="M3 3c3-2 5 1 3 3s-2 5-3 4-3-5 0-7z" fill="#34a848"/><path d="M7 9h3l1 1h5v5H7z" fill="#f5bd2a" stroke="#94640a" stroke-width=".7"/>',
    database: '<path d="M2 3c0-2 9-2 9 0v6c0 2-9 2-9 0z" fill="#eee" stroke="#777"/><path d="M2 5c0 2 9 2 9 0" stroke="#777"/><path d="M7 9h3l1 1h5v5H7z" fill="#f5d88a" stroke="#94640a" stroke-width=".7"/>',
    binocular: '<rect y="1" width="14" height="8" fill="#2a86d8"/><path d="M2 3v4M5 3v4M8 3h3" stroke="#fff"/><path d="M7 7h3v3h2V7h3l1 8h-4v-3h-2v3H6z" fill="#111"/>',
    gridtext: '<rect y="1" width="13" height="8" fill="#3f92dc"/><path d="M2 3h3v4M7 3v4M9 3h3" stroke="#fff"/>' + grid,
    abctable: '<path d="M1 7V2h2.500v5M1 4.500h2M6 2h2.500v5H6zM6 4.500h2.500M14 2h-2.500v5H14" stroke="#222" stroke-width="1.300"/>' + grid,

    newscreen: '<path d="M1.500 4.500h11v10h-11z" fill="#fff" stroke="#2c4a80"/><path d="M1 4h12v2H1z" fill="#2e63c8"/>' + plus,
    openscreen: '<path d="M1.500 1.500h11v8h-11z" fill="#fff" stroke="#3c4c70"/><path d="M1 1h12v3H1z" fill="#2e63c8"/><path d="M5 8h4l1 1h6v6H5z" fill="#f5bd2a" stroke="#94640a" stroke-width=".7"/>',
    wingrid: win + grid,
    left: '<circle cx="8" cy="8" r="7.500" fill="#2eb82e"/><path d="M12 8H5M8 4.500L4.500 8 8 11.500" stroke="#fff" stroke-width="2"/>',
    right: '<circle cx="8" cy="8" r="7.500" fill="#2eb82e"/><path d="M4 8h7M8 4.500L11.500 8 8 11.500" stroke="#fff" stroke-width="2"/>',
    openactive: '<path d="M1.500 1.500h9v8h-9z" fill="#fff" stroke="#345"/><path d="M3 6h4l1 1h7v8H3z" fill="#f5b92a" stroke="#94640a" stroke-width=".7"/><path d="M12 1h3v3h-3z" fill="#e84a3a"/><path d="M6 9l3-3 3 3" stroke="#1a4a9a" stroke-width="1.500"/>',
    blue: '<path d="M1 1h14v14H1z" fill="#5b7db8"/>',
    preview: '<path d="M8 13H1.500V2.500h13V8" stroke="#222" stroke-width="1.800"/>' + find,
    zoomin: '<circle cx="7" cy="7" r="5.500" fill="#fff" stroke="#222" stroke-width="1.500"/><path d="M4 7h6M7 4v6M11 11l4 4" stroke="#222" stroke-width="1.700"/>',
    zoomout: '<circle cx="7" cy="7" r="5.500" fill="#fff" stroke="#222" stroke-width="1.500"/><path d="M4 7h6M11 11l4 4" stroke="#222" stroke-width="1.700"/>',
    fit: '<path d="M1.500 1.500h13v13h-13z" stroke="#666" stroke-dasharray="3 2"/><path d="M4 4l8 8M12 4l-8 8" stroke="#666"/>',
    on: '<path d="M1 3h5v10H1zM9 13V3l5 10V3" stroke="#222" stroke-width="2"/>',
    off: '<path d="M1 3h4v10H1zM7.500 13V3H10M7.500 7H10M12.500 13V3H16M12.500 7H15" stroke="#222" stroke-width="1.800"/>',
    arrowl: '<path d="M1 8l6-5v3h8v4H7v3z" fill="#889"/>',
    arrowr: '<path d="M15 8L9 3v3H1v4h8v3z" fill="#1b5fd0"/>',
    sys: '<rect y="2" width="16" height="9" fill="#2a78c8"/><path d="M2 4h3v5H2M7 4v5h3M12 4v5" stroke="#fff"/>',
    label: '<rect y="2" width="16" height="9" fill="#2a86d8"/><path d="M2 4v5M5 4h3v5H5zM11 4v5h3" stroke="#fff"/>',
    ipn: '<rect y="2" width="16" height="9" fill="#2a78c8"/><path d="M3 4v5M7 9V4h3v3M13 4v5" stroke="#fff"/>',
    layer: '<path d="M1 2h10v9H1z" fill="#4a98a0" stroke="#223"/><path d="M5 6h9v8H5z" fill="#e8eef8" stroke="#223"/>',
    layer2: '<path d="M1 5h10v9H1z" fill="#e8eef8" stroke="#223"/><path d="M5 2h9v8H5z" fill="#f0b040" stroke="#223"/>',
    layer3: '<path d="M1 5h10v9H1z" fill="#c8d8e8" stroke="#223"/><path d="M5 2h9v8H5z" fill="#38a858" stroke="#223"/>',
    front: '<path d="M7 7h8v8H7z" fill="#555"/><path d="M1.500 1.500h9v9h-9z" fill="#f8b820" stroke="#a87408"/>',
    back: '<path d="M1.500 1.500h9v9h-9z" fill="#f8b820" stroke="#a87408"/><path d="M7 7h8v8H7z" fill="#555"/>',
    group: '<path d="M2 2l12 12M14 2L2 14M1 1h4v4H1zM11 11h4v4h-4zM5 5h6v6H5z" fill="#99a" stroke="#667"/>',
    ungroup: '<path d="M2 2l12 12M1 6h5v4H1zM9 8h5v6H9zM8 1h4v4H8z" fill="#99a" stroke="#667"/>',
    stack: '<path d="M1.500 1.500h9v8h-9zM4.500 5.500h10v9h-10z" fill="#fff" stroke="#333"/><path d="M6 8h6M6 11h6" stroke="#333"/><path d="M12 6V2H7" stroke="#1b3cc8" stroke-width="2"/>',
    stack2: '<path d="M1.500 1.500h8v8h-8zM4.500 4.500h7v7h-7zM7.500 7.500h7v7h-7z" fill="#ddd" stroke="#555"/>',
    rotate: '<path d="M7 5l5 9H2zM3 3c3-3 8-1 9 3M12 2v4H9" fill="#aab" stroke="#556"/>',
    flip: '<path d="M13 2v12L7 8zM6 3L2 8l4 5" fill="#aab" stroke="#556"/>',
    rotl: '<path d="M7 6l6 8H1zM3 4c3-3 7-2 9 1" fill="#aab" stroke="#556"/>',
    rotr: '<path d="M9 6l6 8H3zM13 4c-3-3-7-2-9 1" fill="#aab" stroke="#556"/>',
    nodes: '<path d="M3 13V4l10 8V3" stroke="#222" stroke-width="1.800"/><path d="M1 11h4v4H1zM11 1h4v4h-4zM1 2h4v3H1zM11 11h4v3h-4z" fill="#e87018"/>',
    wrench: '<path d="M2 2h5M2 2v11h5M2 7h4" stroke="#556" stroke-width="1.500"/><path d="M8 14l5-5M13 5c-3 0-3 4 0 4s3-2 2-3" stroke="#556" stroke-width="1.800"/>',
    tri: '<path d="M8 3l7 8H1z" fill="#7068e0"/><path d="M9 7v7l2-2 1 3 2-1-1-3h2z" fill="#111"/>',
    rectpick: '<path d="M1 3h14v8H1z" fill="#30c030"/><path d="M9 7v7l2-2 1 3 2-1-1-3h2z" fill="#111"/>',
    pick: '<path d="M1 3h10v8H1z" fill="#3f78d8"/><path d="M9 7v7l2-2 1 3 2-1-1-3h2z" fill="#111"/>',

    folder: '<path d="M1 2h5l1.500 2H15v10H1z" fill="#f9bb16" stroke="#cf8e0a"/><path d="M2 6h12" stroke="#ffe08a"/>',
    delete: '<path d="M1 2h5l1.500 2H14v10H1z" fill="#f9bb16" stroke="#a86e08"/><path d="M8 7h8v8H8z" fill="#fff"/><path d="M9 8l6 6M15 8l-6 6" stroke="#d81e1e" stroke-width="2.200"/>',
    chartwin: win + '<path d="M3 12l3-4 3 2 4-4" stroke="#c03070" stroke-width="1.500"/><path d="M1 9h6v5H1z" fill="#fff" stroke="#333"/>',
    list: '<path d="M3 2h10v12H3z" fill="#f4f4f4" stroke="#888"/><path d="M5 5h6M5 8h6M5 11h6" stroke="#555"/>',
    warnwin: '<path d="M1 2h9v10H1z" fill="#444"/><path d="M2 3h3v8H2z" fill="#d03030"/><path d="M10 5l6 10H4z" fill="#f8c820" stroke="#5a4600" stroke-width=".8"/><path d="M10 8v3.500M10 12.500v1.300" stroke="#222" stroke-width="1.500"/>',
    design: '<path d="M1 1h7v7H1z" fill="#2c5a98"/><path d="M8 1h7v7H8z" fill="#c8d8e8"/><path d="M1 8h7v7H1z" fill="#a8c4dc"/><path d="M8 8h7v7H8z" fill="#d2672e"/>',
    screen: '<path d="M1.500 1.500h13v12h-13z" fill="#f4f9ff" stroke="#2b4a88"/><path d="M1 1h14v4H1z" fill="#2a62cc"/>',
    newwindow: '<path d="M1.500 2.500h10v7h-10zM3.500 7.500h10v7h-10z" fill="#fff" stroke="#2c4a80"/><path d="M3 7h11v3H3zM1 2h10v2H1z" fill="#2e63c8"/>' + plus,
    report: '<path d="M2.500 1.500h9v13h-9zM4 4h6M4 7h6M4 10h6" fill="#e4e4e4" stroke="#777"/><path d="M7 15l5-5M14 6c-3 0-4 4-1 4.500s3-1.500 2.500-2.500" stroke="#222" stroke-width="1.800"/>',
    newreport: '<path d="M2.500 2.500h9v12h-9zM4 6h6M4 9h6M4 12h6" fill="#e4e4e4" stroke="#777"/>' + plus,
    mobile: '<circle cx="7" cy="6" r="5.500" fill="#2c9a78"/><path d="M3 3l4-2 3 3-4 3z" fill="#9ad8ea"/><path d="M1.500 8.500h7v6h-7zM10.500 6.500h4v8h-4z" fill="#fff" stroke="#333"/>',
    newmobile: '<circle cx="7" cy="6" r="5.500" fill="#2c9a78"/><path d="M2.500 8.500h9v6h-9z" fill="#fff" stroke="#333"/><path d="M2 8h10v2H2z" fill="#2e63c8"/>' + plus,

    text: '<path d="M2.500 14L8 2M5 10.500h6" stroke="#111" stroke-width="1.600"/><path d="M8 2l4.500 12" stroke="#111" stroke-width="3.200"/><path d="M0 14.500h5M9 14.500h7" stroke="#111" stroke-width="1.500"/>',
    logo: '<path d="M2 1.500h5v7h7v6H2z" fill="#ffd42a" stroke="#a8800a"/>',
    line: '<path d="M1 15L15 2" stroke="#222" stroke-width="1.800"/>',
    polyline: '<path d="M1 12l5-6 2 6 7-8" stroke="#222" stroke-width="2"/>',
    rect: '<path d="M1 3h14v10H1z" fill="#e2d8f8" stroke="#222" stroke-width="1.800"/>',
    polygon: '<path d="M2 3l6 5 6-5v10H2z" fill="#e2d8f8" stroke="#222" stroke-width="1.800"/>',
    circle: '<circle cx="8" cy="8" r="6" fill="#e2d8f8" stroke="#222" stroke-width="1.800"/>',
    arc: '<path d="M2 14C3 7 7 3 14 2" stroke="#222" stroke-width="2"/>',
    sector: '<path d="M2 14C2 7 7 2 14 2v12z" fill="#e2d8f8" stroke="#222" stroke-width="1.800"/>',
    table: '<path d="M1.500 2.500h13v11h-13zM1.500 6h13M1.500 10h13M6 2.500v11M10 2.500v11" fill="#fff" stroke="#42365a" stroke-width="1.300"/>',
    scale: '<path d="M1 6v5h14V6M4 8v3M8 7v4M12 8v3" stroke="#2a4a58" stroke-width="1.600"/>',
    pipe: '<path d="M3 15V10H1M3 10V6h5V1M8 15v-4h5V2H9" stroke="#222" stroke-width="1.800"/>',
    image: '<path d="M1.500 2.500h13v11h-13z" fill="#e8f4ff" stroke="#667"/><path d="M2 13V9l4-2 8 3v3z" fill="#28a848"/><circle cx="10" cy="5.500" r="2" fill="#f08030"/>',
    dxf: '<path d="M3 2h12v8H3z" fill="#3a8cd8"/><path d="M5 4h2v4H5zM9 4h2v4M13 4v4" stroke="#fff"/><path d="M1 12l4-3v2h9v2H5v2z" fill="#143cb8"/>',
    camera: '<path d="M1.500 1.500h9v8h-9z" stroke="#222" stroke-width="1.300" stroke-dasharray="2 1.500"/><path d="M3 3h5v5H3z" fill="#888"/><path d="M6 8h2l1-2h3l1 2h3v7H6z" fill="#111"/><circle cx="11" cy="11" r="1.800" fill="#fff"/>',
    switch: '<path d="M4 4h11v9H4z" fill="#4a62d8"/><path d="M1 1h3v5H1zM1 3.500h4" stroke="#111" stroke-width="1.500"/><path d="M9 7l2 4 4 1-2 4h-4z" fill="#f5c08a" stroke="#6a3c10" stroke-width=".7"/>',
    lamp: '<circle cx="10" cy="7" r="5" fill="#ffd820" stroke="#a88408"/><path d="M8 12h4v3H8z" fill="#888"/><path d="M1 2l1 5 1.500-3L5 7l1-5" stroke="#111" stroke-width="1.400"/>',
    numeric: '<path d="M1 3h14v8H1z" fill="#d8d0c0" stroke="#222"/><path d="M3.500 5v4M6 5h2v2H6v2h2M10 5h2v4h-2M10 7h2" stroke="#222"/><path d="M9 9l5 1-1 5H9z" fill="#f5c08a" stroke="#6a3c10" stroke-width=".7"/>',
    ascii: '<path d="M.500 3.500h15v10H.500z" stroke="#3058d0" stroke-dasharray="2 1" fill="#fff"/><path d="M2.500 11V6H5v5M2.500 9H5M7 6h2.500v5H7zM7 8.500h2M14 6h-2.500v5H14" stroke="#222"/>',
    clock: '<circle cx="8" cy="8" r="6.300" fill="#fff" stroke="#1c20b0" stroke-width="2"/><path d="M8 4v4.500h3.500" stroke="#1c20b0" stroke-width="1.500"/>',
    comment: '<path d="M6 4h9v7h-5l-2 3v-3H5V6z" fill="#eee" stroke="#666"/><path d="M1 1l1 5 1.500-3L5 6l1-5" stroke="#111" stroke-width="1.400"/><path d="M7 7h6M7 9h5" stroke="#888"/>',
    textobj: '<path d="M1.500 1.500h13v13h-13z" fill="#fff" stroke="#3058d0" stroke-dasharray="2 1"/><path d="M4 4.500h8M8 4v8" stroke="#222" stroke-width="3"/>',
    alarm: '<path d="M6 1l6 11H0z" fill="#f8c820" stroke="#5a4600"/><path d="M6 5v3M6 9v1.500" stroke="#222" stroke-width="1.500"/><path d="M11 8h4v6h-4z" fill="#222"/>',
    recipe: '<path d="M4.500 1.500h10v9h-10zM9.500 2v8" fill="#fff" stroke="#555"/><path d="M10 3C5 4 4 7 4 9H2l3 4 3-4H6" fill="#2030c8"/>' + grid,
    graph: '<path d="M1 11l4-5 4 2 5-6" stroke="#d02020" stroke-width="1.600"/><circle cx="10" cy="10" r="4.500" fill="#f8b020"/><path d="M10 10V5.500A4.500 4.500 0 0 1 14 12z" fill="#4048d0"/><path d="M2 3v2M2 8v1M2 12v2" stroke="#222" stroke-width="2"/>',
    meter: '<circle cx="8" cy="8" r="6.500" fill="#e8e0b0" stroke="#222" stroke-width="1.300"/><path d="M3 6a6 6 0 0 1 4-3l1 5z" fill="#38a848"/><path d="M13 6a6 6 0 0 0-4-3L8 8z" fill="#e05a30"/><path d="M8 9l3-4M5 12h6" stroke="#222" stroke-width="1.300"/>',
    slider: '<path d="M7 1h3v4h5v3h-5v3H7V8H2V5h5z" fill="#289a38" stroke="#14601e" stroke-width=".6"/><path d="M2 12v3M6 13v2M10 13v2M14 12v3" stroke="#333"/>',

    alignl: '<path d="M1.500 1v14M3 3h11v2H3M3 7h7v2H3M3 11h11v2H3" stroke="#334466"/>',
    alignc: '<path d="M8 1v14M2 3h12v3H2zM4 9h8v3H4z" stroke="#334466"/>',
    alignr: '<path d="M14.500 1v14M13 3H2v2h11M13 7H6v2h7M13 11H2v2h11" stroke="#334466"/>',
    alignt: '<path d="M1 1.500h14M3 3v11h3V3M9 3v7h3V3" stroke="#334466"/>',
    alignm: '<path d="M0 8h16M3 2v12h3V2zM9 4v8h4V4z" stroke="#334466"/>',
    alignb: '<path d="M1 14.500h14M3 13V2h3v11M9 13V6h3v7" stroke="#334466"/>',
    distx: '<path d="M1.500 1v14M14.500 1v14M4 2h3v12H4zM9 2h3v12H9z" stroke="#334466"/>',
    disty: '<path d="M1 1.500h14M1 14.500h14M2 4h12v3H2zM2 9h12v3H2z" stroke="#334466"/>',
    dash: '<path d="M1 3h14" stroke="#345" stroke-width="2"/><path d="M1 7h14M1 10.500h14M1 14h14" stroke="#345" stroke-width="1.600" stroke-dasharray="3 1"/>',
    lines: '<path d="M1 3h14M1 7h14" stroke="#345" stroke-width="2"/><path d="M1 12.500h14" stroke="#345" stroke-width="4"/>',
    pen: '<path d="M5 10l7-8 2 2-7 7z" fill="#aab" stroke="#556"/><path d="M1 14h14" stroke="#345" stroke-width="3"/>',
    outline: '<path d="M2 1h12v11H2z" stroke="#446" stroke-width="1.800"/><path d="M8 14v2" stroke="#446" stroke-width="2"/>',
    hatch: '<path d="M2 1h12v10H2zM2 7l6-6M2 11L12 1M7 11l7-7" stroke="#667"/><path d="M1 14h14" stroke="#345" stroke-width="3"/>',
    bucket: '<path d="M3 7l6-5 5 6-5 3H4z" fill="#aab" stroke="#556"/><path d="M1 14h14" stroke="#345" stroke-width="3"/>',
    fonta: '<path d="M3 11l4.500-9h1L13 11M5 8h6" stroke="#345" stroke-width="2"/><path d="M1 14h14" stroke="#345" stroke-width="3"/>',
    dee: '<path d="M2 2v12M5 2v12M8 2h2c5 0 5 12 0 12H8z" stroke="#556" stroke-width="1.500"/>',
    ess: '<path d="M12 3C8 0 3 2 5 5s7 1 7 4-5 3-8 1" stroke="#345" stroke-width="2.300"/><path d="M1 14h14" stroke="#345" stroke-width="3"/>',
    corner: '<path d="M0 4h7M4 0v16" stroke="#555" stroke-width="1.500"/><path d="M6.500 5.500h8v9h-8z" stroke="#888"/>',

    start: '<path d="M2 4l5.500-1v4.700H2zM8.300 3L15 2v5.700H8.300zM2 8.400h5.500V13L2 12.200zM8.300 8.400H15V14l-6.700-.900z" fill="#fff"/>',
    search: '<circle cx="9.500" cy="6" r="4.800" stroke="#fff" stroke-width="1.400"/><path d="M6 9.500L1 15" stroke="#fff" stroke-width="1.600"/>',
    taskview: '<path d="M3 5.500h7v5H3zM3 2v1.500h7V2M3 14v-1.500h7V14M13 2v12M12 7h2" stroke="#ddd" stroke-width=".9"/>',
    explorer: '<path d="M0 2h6l1 2h8v11H0z" fill="#f5b92e"/><path d="M0 5h16v8H0z" fill="#ffdc70"/><path d="M3 15V9h10v6h-3v-3H6v3z" fill="#4ea4da"/>',
    chrome: '<circle cx="8" cy="8" r="8" fill="#34a853"/><path d="M1.070 4A8 8 0 0 1 14.930 4L8 8z" fill="#ea4335"/><path d="M1.070 4h7L4.500 10z" fill="#ea4335"/><path d="M14.930 4A8 8 0 0 1 8 16l3.500-6L8 4z" fill="#fbc116"/><path d="M1.070 4L4.500 10 8 16A8 8 0 0 1 1.070 4z" fill="#34a853"/><circle cx="8" cy="8" r="3.900" fill="#fff"/><circle cx="8" cy="8" r="3" fill="#4285f4"/>',
    record: '<circle cx="8" cy="8" r="7" fill="#111" stroke="#fff" stroke-width="1.200"/><circle cx="8" cy="8" r="4.300" fill="#ee1c1c"/>',
    powerpoint: '<circle cx="9" cy="8" r="7" fill="#ee6a4a"/><path d="M9 1a7 7 0 0 1 7 7H9z" fill="#ff9b7a"/><rect y="4" width="8" height="8" rx="1" fill="#c13b1b"/><path d="M2.800 10.500v-5h1.500a1.300 1.300 0 0 1 0 3H2.800" stroke="#fff" stroke-width="1.100"/>',
    gttask: '<rect width="16" height="16" fill="#118a4c"/><path d="M2 4h9v2M2 4v7h5" stroke="#fff" stroke-width="1.800"/><path d="M9 1l7 3v2H7z" fill="#9fdcae"/><path d="M9 8h5v6H9M10 11h4" stroke="#fff" stroke-width="1.600"/>'
};

function svg(name) {
    return `<svg viewBox="0 0 16 16" fill="none" aria-hidden="true">${icons[name]}</svg>`;
}

// "*name" pressed, "-name" disabled, "name^" with a drop arrow,
// "v" drop arrow alone, "[text]" combo box, "|" separator
function tool(token) {
    if (token === '|') return '<span class="sep"></span>';
    if (token === 'v') return `<button class="drop" aria-label="More">${svg('down')}</button>`;
    if (token[0] === '[') {
        const value = token.slice(1, -1);
        return `<span class="combo"><select aria-label="${value}"><option>${value}</option></select>${svg('down')}</span>`;
    }
    const state = token[0] === '*' ? ' on' : token[0] === '-' ? ' off' : '';
    const name = token.replace(/[*^-]/g, '');
    const arrow = token.endsWith('^') ? `<span class="arrow">${svg('down')}</span>` : '';
    return `<button class="tool${state}" aria-label="${name}">${svg(name)}${arrow}</button>`;
}

document.querySelectorAll('[data-tools]').forEach(bar => {
    const items = bar.dataset.tools.split(' ').map(tool).join('');
    bar.innerHTML = `<span class="grip"></span>${items}<span class="cap"></span>`;
});

document.querySelectorAll('[data-icon]').forEach(el => {
    el.innerHTML = svg(el.dataset.icon);
});

document.querySelectorAll('.cap').forEach(el => {
    el.innerHTML = svg('capdown');
});
```
